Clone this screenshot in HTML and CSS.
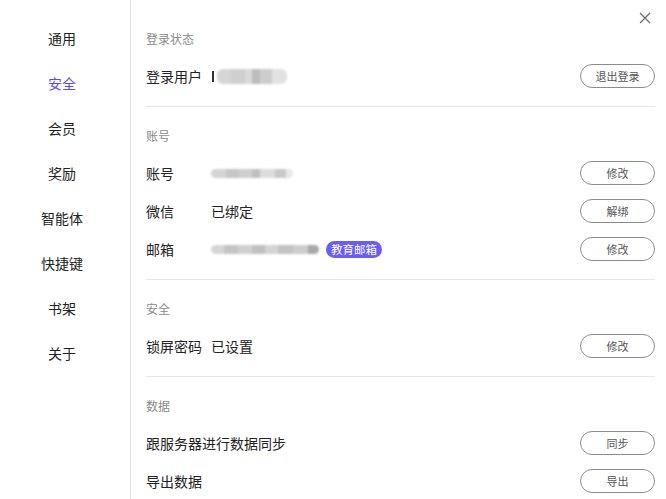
FILE: index.html
```html
<!DOCTYPE html>
<html lang="zh-CN">
<head>
<meta charset="utf-8">
<title>设置</title>
<link rel="stylesheet" href="styles.css">
</head>
<body>
<div class="app">
  <nav class="sidebar">
    <div class="nav-item">通用</div>
    <div class="nav-item active">安全</div>
    <div class="nav-item">会员</div>
    <div class="nav-item">奖励</div>
    <div class="nav-item">智能体</div>
    <div class="nav-item">快捷键</div>
    <div class="nav-item">书架</div>
    <div class="nav-item">关于</div>
  </nav>
  <main class="content">
    <button class="close" aria-label="关闭">
      <svg width="12" height="12" viewBox="0 0 12 12"><path d="M1 1L11 11M11 1L1 11" stroke="#6b6b6b" stroke-width="1.2" fill="none"/></svg>
    </button>

    <section class="section">
      <div class="section-title">登录状态</div>
      <div class="rows">
        <div class="row">
          <span class="label">登录用户</span>
          <span class="value"><span class="caret"></span><span class="blur blur-user"></span></span>
          <button class="btn">退出登录</button>
        </div>
      </div>
    </section>

    <section class="section">
      <div class="section-title">账号</div>
      <div class="rows">
        <div class="row">
          <span class="label">账号</span>
          <span class="value"><span class="blur blur-account"></span></span>
          <button class="btn">修改</button>
        </div>
        <div class="row">
          <span class="label">微信</span>
          <span class="value">已绑定</span>
          <button class="btn">解绑</button>
        </div>
        <div class="row">
          <span class="label">邮箱</span>
          <span class="value"><span class="blur blur-mail"></span><span class="badge">教育邮箱</span></span>
          <button class="btn">修改</button>
        </div>
      </div>
    </section>

    <section class="section">
      <div class="section-title">安全</div>
      <div class="rows">
        <div class="row">
          <span class="label">锁屏密码</span>
          <span class="value">已设置</span>
          <button class="btn">修改</button>
        </div>
      </div>
    </section>

    <section class="section last">
      <div class="section-title">数据</div>
      <div class="rows">
        <div class="row">
          <span class="label wide">跟服务器进行数据同步</span>
          <button class="btn">同步</button>
        </div>
        <div class="row">
          <span class="label wide">导出数据</span>
          <button class="btn">导出</button>
        </div>
      </div>
    </section>
  </main>
</div>
</body>
</html>
```

FILE: styles.css
```css
* { box-sizing: border-box; }
html, body { margin: 0; padding: 0; background: #fff; }
body {
  font-family: "Noto Sans CJK SC", "Noto Sans", sans-serif;
  font-size: 14px;
  color: #222;
  width: 666px;
  height: 499px;
  overflow: hidden;
}
.app { display: flex; height: 499px; }
.sidebar {
  width: 131px;
  flex: none;
  border-right: 1px solid #e4e4e4;
  padding-top: 16px;
  display: flex;
  flex-direction: column;
}
.nav-item {
  height: 45px;
  line-height: 45px;
  text-align: center;
  padding-right: 6px;
  font-size: 14px;
  color: #222;
}
.nav-item.active { color: #5b4cf2; }

.content {
  position: relative;
  flex: 1;
  padding: 29px 11px 0 15px;
}
.close {
  position: absolute;
  top: 11px;
  right: 14px;
  width: 14px;
  height: 14px;
  padding: 1px;
  border: 0;
  background: none;
  display: flex;
  align-items: center;
  justify-content: center;
}
.section {
  padding-bottom: 18px;
  border-bottom: 1px solid #e6e6e6;
  margin-bottom: 19px;
}
.section.last { border-bottom: 0; }
.section-title {
  font-size: 12px;
  line-height: 20px;
  color: #8a8a8a;
  margin-bottom: 15px;
}
.rows { display: flex; flex-direction: column; gap: 14px; }
.row {
  display: flex;
  align-items: center;
  height: 24px;
}
.label { width: 65px; flex: none; }
.label.wide { width: auto; }
.value { flex: 1; display: flex; align-items: center; }
.btn {
  margin-left: auto;
  flex: none;
  width: 75px;
  height: 24px;
  border: 1px solid #8c8c8c;
  border-radius: 12px;
  background: #fff;
  font-family: "Noto Sans CJK SC", sans-serif;
  font-size: 11px;
  color: #555;
  padding: 0;
}
.caret {
  width: 2px;
  height: 11px;
  background: #333;
  margin-left: 1px;
  margin-right: 3px;
}
.blur {
  display: inline-block;
  filter: blur(1.2px);
  border-radius: 6px;
}
.blur-user {
  width: 70px;
  height: 15px;
  background: linear-gradient(90deg, #d6d6d6 0 20%, #cfcfcf 20% 40%, #d9d9d9 40% 50%, #bdbdbd 50% 62%, #cdcdcd 62% 78%, #e2e2e2 78% 100%);
}
.blur-account {
  width: 82px;
  height: 9px;
  background: linear-gradient(90deg, #d4d4d4 0 18%, #c6c6c6 18% 34%, #cfcfcf 34% 50%, #c0c0c0 50% 60%, #dcdcdc 60% 78%, #c8c8c8 78% 92%, #e8e8e8 92% 100%);
}
.blur-mail {
  width: 108px;
  height: 9px;
  margin-right: 7px;
  background: linear-gradient(90deg, #d6d6d6 0 12%, #c4c4c4 12% 25%, #d0d0d0 25% 38%, #c0c0c0 38% 50%, #d4d4d4 50% 62%, #c2c2c2 62% 76%, #cdcdcd 76% 90%, #a8a8a8 90% 100%);
}
.badge {
  display: inline-block;
  height: 17px;
  line-height: 17px;
  padding: 0 5px;
  border-radius: 9px;
  background: #6a5cf6;
  color: #fff;
  font-size: 11.5px;
}
```
